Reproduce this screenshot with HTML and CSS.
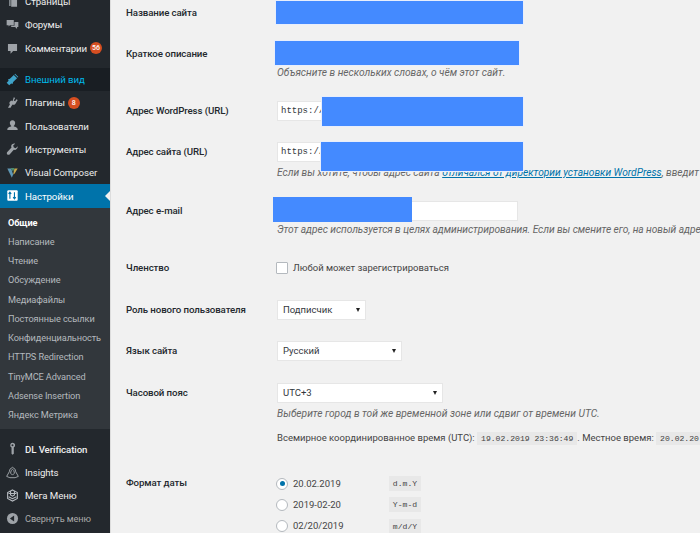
FILE: index.html
```html
<!DOCTYPE html>
<html lang="ru">
<head>
<meta charset="utf-8">
<title>Общие настройки</title>
<link rel="stylesheet" href="styles.css">
</head>
<body>
<div class="page">
<aside class="side">
  <ul class="menu">
    <li class="item"><svg class="ico" viewBox="0 0 20 20"><path d="M5 2h10v2H7v13H5z M8 5h9v13H8z" fill="#9ea3a8"/></svg>Страницы</li>
    <li class="item"><svg class="ico" viewBox="0 0 20 20"><path d="M1 3h11v8H6l-2 2v-2H1z M13 6h6v8h-2v3l-3-3H8v-2h5z" fill="#9ea3a8"/></svg>Форумы</li>
    <li class="item"><svg class="ico" viewBox="0 0 20 20"><path d="M3 3h14v11h-6l-4 4v-4H3z" fill="#9ea3a8"/></svg>Комментарии<span class="badge wide">56</span></li>
    <li class="item current-group"><svg class="ico" viewBox="0 0 20 20"><path d="M1 15l3-3-1-2 3-1 6-6 5 5-6 6-1 3-2-1-3 3z M13 2l5 5 1-1-5-5z" fill="#3fa3c9"/></svg>Внешний вид</li>
    <li class="item"><svg class="ico" viewBox="0 0 20 20"><path d="M12 2l2 1-2 4 2 1 2-3 2 1-3 5c-1 2-3 3-5 2l-2 3-1 2H3l3-5c-1-1-1-3 0-4l2-2 2 1z" fill="#9ea3a8"/></svg>Плагины<span class="badge">8</span></li>
    <li class="item"><svg class="ico" viewBox="0 0 20 20"><path d="M10 2a4 4 0 0 1 4 5c-.3 1.600-1.200 3-2 3.500v1c3 .5 6 2 6 4.500v1H2v-1c0-2.500 3-4 6-4.500v-1C7.200 10 6.300 8.600 6 7a4 4 0 0 1 4-5z" fill="#9ea3a8"/></svg>Пользователи</li>
    <li class="item"><svg class="ico" viewBox="0 0 20 20"><path d="M18 5l-3 3-3-1-1-3 3-3c-3-.5-6 1-6 4 0 1 0 1.500.5 2L2 14c-1 1-1 2.500 0 3.500s2.500 1 3.500 0L12 10.500c3 1 6.500-2 6-5.500z" fill="#9ea3a8"/></svg>Инструменты</li>
    <li class="item"><svg class="ico" viewBox="0 0 20 20"><path d="M2 4h6l3 9-2 5z" fill="#5f97b5"/><path d="M11 13l2-9h5l-5 8z" fill="#c9a94b"/><path d="M7 3l4 6 2-6z" fill="#4c8a6e"/></svg>Visual Composer</li>
    <li class="item active"><svg class="ico" viewBox="0 0 20 20"><rect x="2" y="2" width="16" height="16" rx="1.500" fill="#fff"/><path d="M6 5v10M4 7.500 6 5l2 2.500M13 5v10M11 12.500 13 15l2-2.500" stroke="#0073aa" stroke-width="1.700" fill="none"/></svg>Настройки</li>
  </ul>
  <ul class="submenu">
    <li class="sub on">Общие</li>
    <li class="sub">Написание</li>
    <li class="sub">Чтение</li>
    <li class="sub">Обсуждение</li>
    <li class="sub">Медиафайлы</li>
    <li class="sub">Постоянные ссылки</li>
    <li class="sub">Конфиденциальность</li>
    <li class="sub">HTTPS Redirection</li>
    <li class="sub">TinyMCE Advanced</li>
    <li class="sub">Adsense Insertion</li>
    <li class="sub">Яндекс Метрика</li>
  </ul>
  <ul class="menu lower">
    <li class="item strong"><svg class="ico" viewBox="0 0 20 20"><path d="M10 1a4 4 0 0 1 2 7.500V18l-2 1.500L8.500 18V8.500A4 4 0 0 1 10 1z" fill="#9ea3a8"/><circle cx="10" cy="5" r="1.500" fill="#23282d"/></svg>DL Verification</li>
    <li class="item"><svg class="ico" viewBox="0 0 20 20"><path d="M10 2l4 3 1 4 4 7-5 2H6l-5-2 4-7 1-4z M10 5L8 7l-1 4 3 3 3-3-1-4z" fill="none" stroke="#9ea3a8" stroke-width="1.500"/></svg>Insights</li>
    <li class="item"><svg class="ico" viewBox="0 0 20 20"><path d="M10 1.500l7.500 4v9l-7.500 4-7.500-4v-9z M4 7h12M4 12l6 3 6-3M7 4v5l3 2 3-2V4" fill="none" stroke="#b4b9be" stroke-width="1.700"/></svg>Мега Меню</li>
    <li class="item collapse"><svg class="ico" viewBox="0 0 20 20"><circle cx="10" cy="10" r="8.500" fill="#9ea3a8"/><path d="M12.500 5.500v9L6 10z" fill="#23282d"/></svg>Свернуть меню</li>
  </ul>
</aside>
<main class="main">
  <form class="form">
    <div class="row r1"><label class="lab">Название сайта</label><div class="val"><input class="inp w246" type="text"></div></div>
    <div class="row r2"><label class="lab">Краткое описание</label><div class="val"><input class="inp w241" type="text"><p class="desc d1">Объясните в нескольких словах, о чём этот сайт.</p></div></div>
    <div class="row r3"><label class="lab">Адрес WordPress (URL)</label><div class="val"><input class="inp w246 mono" type="text" value="https://"></div></div>
    <div class="row r4"><label class="lab">Адрес сайта (URL)</label><div class="val"><input class="inp w246 mono" type="text" value="https://"><p class="desc d3">Если вы хотите, чтобы адрес сайта <a class="link" href="#">отличался от директории установки WordPress</a>, введит</p></div></div>
    <div class="row r5"><label class="lab">Адрес e-mail</label><div class="val"><input class="inp w241" type="text"><p class="desc d1 tight">Этот адрес используется в целях администрирования. Если вы смените его, на новый адрес б</p></div></div>
    <div class="row r6"><label class="lab">Членство</label><div class="val check"><span class="box"></span><span>Любой может зарегистрироваться</span></div></div>
    <div class="row r7"><label class="lab">Роль нового пользователя</label><div class="val"><span class="sel w89">Подписчик<i class="tri"></i></span></div></div>
    <div class="row r8"><label class="lab">Язык сайта</label><div class="val"><span class="sel w125">Русский<i class="tri"></i></span></div></div>
    <div class="row r9"><label class="lab">Часовой пояс</label><div class="val"><span class="sel w166">UTC+3<i class="tri"></i></span><p class="desc d3">Выберите город в той же временной зоне или сдвиг от времени UTC.</p><p class="time">Всемирное координированное время (UTC): <code class="code">19.02.2019 23:36:49</code>. Местное время: <code class="code">20.02.20</code></p></div></div>
    <div class="row r10"><label class="lab">Формат даты</label><div class="val dates">
      <div class="date"><span class="rad on"></span><span class="dt">20.02.2019</span><code class="code fmt">d.m.Y</code></div>
      <div class="date"><span class="rad"></span><span class="dt">2019-02-20</span><code class="code fmt">Y-m-d</code></div>
      <div class="date"><span class="rad"></span><span class="dt">02/20/2019</span><code class="code fmt">m/d/Y</code></div>
    </div></div>
  </form>
  <div class="mask m1"></div>
  <div class="mask m2"></div>
  <div class="mask m3"></div>
  <div class="mask m4"></div>
  <div class="mask m5"></div>
</main>
</div>
</body>
</html>
```
FILE: styles.css
```css
* { box-sizing: border-box; }
html, body { margin: 0; height: 533px; overflow: hidden; background: #f1f1f1; }
body { font-family: Roboto, "Open Sans", sans-serif; font-size: 9.500px; color: #444; }
ul { list-style: none; margin: 0; padding: 0; }
p { margin: 0; }
.page { display: flex; width: 700px; height: 533px; overflow: hidden; }

.side { flex: 0 0 110px; background: #23282d; color: #eee; height: 533px; overflow: hidden; }
.menu { margin-top: -10px; }
.item { display: flex; align-items: center; height: 23.3px; padding-left: 25px; position: relative; font-size: 9.700px; letter-spacing: -0.1px; white-space: nowrap; }
.strong { font-weight: 500; }
.ico { position: absolute; left: 6px; top: 5px; width: 13px; height: 13px; }
.current-group { margin-top: 8px; background: #191e23; color: #00b9eb; }
.active { background: #0073aa; color: #fff; }
.active::after { content: ""; position: absolute; right: 0; top: 7px; border: 5px solid transparent; border-right-color: #f1f1f1; border-left-width: 0; }
.badge { display: inline-block; margin-left: 3px; min-width: 12px; height: 12px; padding: 0 2px; border-radius: 6px; background: #d54e21; color: #fff; font-size: 7px; font-weight: 500; line-height: 12px; text-align: center; letter-spacing: 0; }
.submenu { background: #32373c; padding: 5px 0 5px; }
.sub { height: 19.25px; line-height: 19.250px; padding-left: 8px; font-size: 9.200px; letter-spacing: -0.1px; color: #b4b9be; white-space: nowrap; }
.sub.on { color: #fff; font-weight: 700; }
.lower { margin-top: 8px; }
.collapse { color: #aaa; font-size: 9.200px; }

.main { flex: 1; position: relative; border-left: 1px solid #ddd; min-width: 0; overflow: hidden; }
.form { padding: 3px 0 0 15px; }
.row { display: grid; grid-template-columns: 151px 1fr; white-space: nowrap; }
.r1 { height: 41px; } .r2 { height: 57px; } .r3 { height: 41px; } .r4 { height: 59px; } .r5 { height: 57px; }
.r6 { height: 42px; } .r7 { height: 41px; } .r8 { height: 42px; } .r9 { height: 90px; } .r10 { height: 90px; }
.lab { font-size: 9.700px; letter-spacing: -0.1px; font-weight: 500; color: #23282d; line-height: 20px; }
.val { min-width: 0; font-size: 9.500px; line-height: 20px; }
.inp { display: block; height: 20px; padding: 0 3px; border: 1px solid #e6e6e6; background: #fff; font-size: 9.500px; color: #32373c; }
.mono { font-family: "Liberation Mono", monospace; font-size: 9px; }
.w246 { width: 246px; } .w241 { width: 241px; }
.desc { font-style: italic; color: #666; line-height: 16px; font-size: 10.200px; }
.tight { letter-spacing: -0.05px; }
.d1 { margin-top: 1px; } .d3 { margin-top: 3px; }
.link { color: #0073aa; }
.check { display: flex; align-items: center; align-self: start; height: 20px; gap: 5px; }
.box { width: 12px; height: 12px; margin-left: -1px; border: 1px solid #b4b9be; background: #fff; border-radius: 1px; }
.sel { display: flex; align-items: center; justify-content: space-between; height: 20px; padding: 0 5px 0 5px; border: 1px solid #e6e6e6; background: #fff; color: #32373c; }
.w89 { width: 89px; } .w125 { width: 125px; } .w166 { width: 166px; }
.tri { width: 0; height: 0; border: 2.500px solid transparent; border-top: 4px solid #222; border-bottom-width: 0; }
.time { margin-top: 8px; line-height: 16px; color: #444; }
.code { background: #e8e8e8; font-family: "Liberation Mono", monospace; font-size: 8.100px; padding: 2px 4px; color: #444; }
.date { display: flex; align-items: center; height: 21.300px; }
.rad { width: 12px; height: 12px; margin-left: -1px; border: 1px solid #b4b9be; background: #fff; border-radius: 50%; display: flex; align-items: center; justify-content: center; }
.rad.on::before { content: ""; width: 5px; height: 5px; border-radius: 50%; background: #0073aa; }
.dt { width: 101px; padding-left: 5px; }
.fmt { display: block; width: 32px; height: 15px; line-height: 11px; text-align: center; padding: 2px 0; }

.mask { position: absolute; background: #448aff; border: 1px solid #e8eefc; }
.m1 { left: 164px; top: 0; width: 249px; height: 25px; }
.m2 { left: 163px; top: 40px; width: 246px; height: 26px; }
.m3 { left: 210px; top: 96px; width: 203px; height: 31px; }
.m4 { left: 209px; top: 141px; width: 204px; height: 31px; }
.m5 { left: 162px; top: 197px; width: 139px; height: 25px; border: 0; }
```
